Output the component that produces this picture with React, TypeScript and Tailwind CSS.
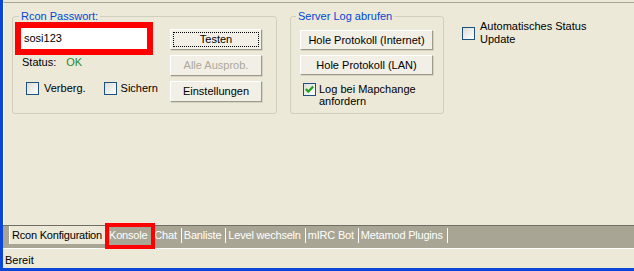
function CheckBox({ checked = false }: { checked?: boolean }) {
  return (
    <span className="w-[13px] h-[13px] shrink-0 border border-[#1C5180] bg-gradient-to-br from-[#DCDCD7] to-white flex items-center justify-center">
      {checked && (
        <svg width="11" height="11" viewBox="0 0 11 11">
          <path d="M1.8 5 L4.3 7.6 L9.2 2.6" fill="none" stroke="#21A121" strokeWidth="2.2" />
        </svg>
      )}
    </span>
  );
}

function Button({ label, w, h = 20, disabled = false, focused = false }: { label: string; w: string; h?: number; disabled?: boolean; focused?: boolean }) {
  return (
    <div
      className={`${w} flex items-center justify-center bg-[#F1EFE6] border border-t-white border-l-white border-b-[#9D9A8A] border-r-[#9D9A8A] shadow-[1px_1px_0_#D6D3C4] ${disabled ? "text-[#ACA899]" : "text-black"}`}
      style={{ height: h }}
    >
      {focused ? (
        <span className="w-[calc(100%-4px)] h-[calc(100%-4px)] border border-dotted border-black flex items-center justify-center">
          {label}
        </span>
      ) : (
        label
      )}
    </div>
  );
}

export default function App() {
  const tabs = ["Konsole", "Chat", "Banliste", "Level wechseln", "mIRC Bot", "Metamod Plugins"];

  return (
    <div className="w-[634px] h-[271px] bg-[#ECE9D8] flex flex-col border-l-[3px] border-b-[3px] border-[#0A46D8] font-['Liberation_Sans',Arial,sans-serif] text-[11px] leading-[13px] text-black overflow-hidden">
      {/* tab page */}
      <div className="h-[225px] pt-[2px]">
        <div className="h-full border-t border-t-[#A8A595] border-l border-l-white pl-[8px] flex items-start">
          {/* Rcon Passwort */}
          <fieldset className="mt-[7px] w-[265px] h-[104px] border border-[#D0D0BF] rounded-[3px]">
            <legend className="ml-[6px] px-[2px] text-[#0046D5]">Rcon Passwort:</legend>
            <div className="flex">
              <div className="pl-[2px] -mt-[1px] w-[157px]">
                <div className="relative z-10 w-[138px] h-[33px] border-[6px] border-[#FF0000] bg-white flex items-center pl-[3px]">
                  sosi123
                </div>
                <div className="pl-[7px] mt-[1px] flex gap-[10px]">
                  <span>Status:</span>
                  <span className="text-[#2E8B2E]">OK</span>
                </div>
                <div className="mt-[13px] pl-[11px] flex items-center">
                  <CheckBox />
                  <span className="ml-[5px]">Verberg.</span>
                  <span className="ml-[18px]"><CheckBox /></span>
                  <span className="ml-[4px]">Sichern</span>
                </div>
              </div>
              <div className="mt-[6px] flex flex-col gap-[5px]">
                <Button label="Testen" w="w-[92px]" h={21} focused />
                <Button label="Alle Ausprob." w="w-[92px]" h={21} disabled />
                <Button label="Einstellungen" w="w-[92px]" h={21} />
              </div>
            </div>
          </fieldset>

          {/* Server Log */}
          <fieldset className="mt-[7px] ml-[13px] w-[154px] h-[104px] border border-[#D0D0BF] rounded-[3px]">
            <legend className="ml-[5px] px-[2px] text-[#0046D5]">Server Log abrufen</legend>
            <div className="pl-[9px] mt-[7px] flex flex-col gap-[5px]">
              <Button label="Hole Protokoll (Internet)" w="w-[133px]" h={20} />
              <Button label="Hole Protokoll (LAN)" w="w-[133px]" h={20} />
            </div>
            <div className="pl-[12px] mt-[8px] flex items-start">
              <CheckBox checked />
              <span className="ml-[2px] leading-[12px] pl-[1px]">
                Log bei Mapchange
                <br />
                anfordern
              </span>
            </div>
          </fieldset>

          {/* Auto update */}
          <div className="ml-[18px] mt-[17px] flex items-center">
            <CheckBox />
            <span className="ml-[5px]">
              Automatisches Status
              <br />
              Update
            </span>
          </div>
        </div>
      </div>

      {/* tab strip */}
      <div className="relative h-[23px] bg-[#A8A594] border-t border-t-[#716F64] flex items-start tracking-[-0.2px]">
        <div className="ml-[6px] w-[96px] h-[18px] bg-[#ECE9D8] border-l border-l-white pl-[2px] flex items-center text-black whitespace-nowrap">
          Rcon Konfiguration
        </div>
        <div className="flex items-center h-[18px] text-white">
          {tabs.map((t, i) => (
            <div key={i} className="flex items-center h-full">
              <span className={`${i === 0 ? "pl-[4px]" : "pl-[2px]"} pr-[4px] whitespace-nowrap`}>{t}</span>
              <span className="w-px h-[15px] bg-white" />
            </div>
          ))}
        </div>
        {/* highlight around Konsole */}
        <div className="absolute left-[102px] -top-[3px] w-[50px] h-[26px] border-4 border-[#FF0000]" />
      </div>

      {/* status bar */}
      <div className="flex-1 border-t border-t-white pl-[2px] pt-[5px] text-black">Bereit</div>
    </div>
  );
}
